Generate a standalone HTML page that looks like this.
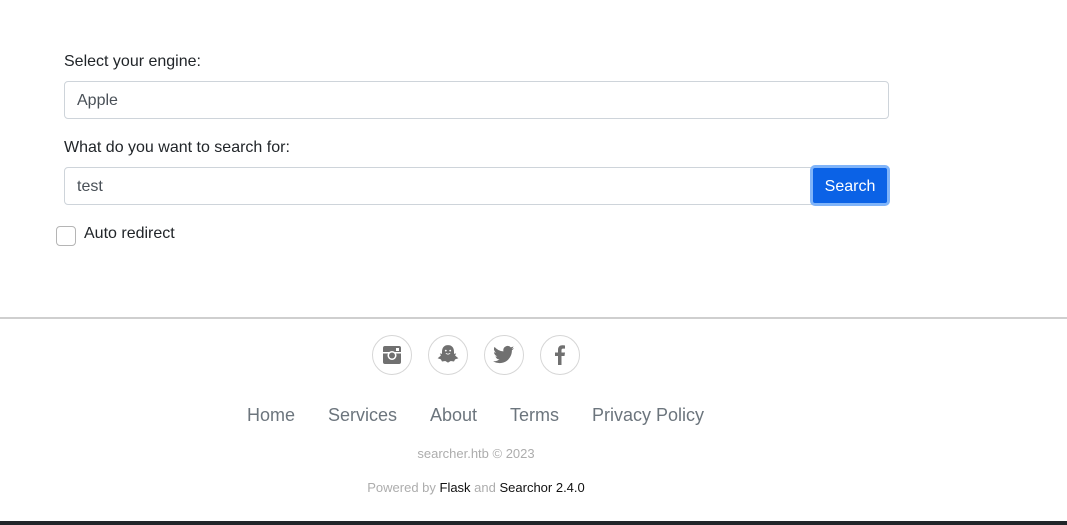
<!DOCTYPE html>
<html><head><style>
body{margin:0;width:1067px;height:525px;position:relative;font-family:"Liberation Sans",sans-serif;background:#fff;overflow:hidden;color:#212529}
.abs{position:absolute}
.lbl{font-size:16px}
.inp{position:absolute;border:1px solid #ced4da;border-radius:4px;box-sizing:border-box;height:38px;font-size:16px;color:#495057;padding-left:12px;line-height:38px}
.btn{position:absolute;left:810px;top:165px;width:80px;height:41px;box-sizing:border-box;border:3px solid #80b4f9;border-radius:5px;background:#0b62e6;color:#fff;font-size:16px;text-align:center;line-height:37px}
.circ{position:absolute;top:335px;width:38px;height:38px;border:1px solid #d6d6d6;border-radius:50%;display:flex;align-items:center;justify-content:center}
.nav{position:absolute;top:405px;font-size:18px;color:#6c757d}
</style></head><body>
<div class="abs lbl" style="left:64px;top:53px">Select your engine:</div>
<div class="inp" style="left:64px;top:81px;width:825px">Apple</div>
<div class="abs lbl" style="left:64px;top:139px">What do you want to search for:</div>
<div class="inp" style="left:64px;top:167px;width:750px;border-radius:4px 0 0 4px">test</div>
<div class="btn">Search</div>
<div class="abs" style="left:56px;top:226px;width:18px;height:18px;border:1px solid #b5b5b5;border-radius:4px"></div>
<div class="abs lbl" style="left:84px;top:225px">Auto redirect</div>
<div class="abs" style="left:0;top:317px;width:1067px;height:2px;background:#cfcfcf"></div>
<div class="circ" style="left:372px"><svg width="20" height="20" viewBox="0 0 20 20"><rect x="1" y="1" width="18" height="18" rx="2" fill="#707070"/><rect x="1" y="7" width="18" height="1.5" fill="#fff"/><circle cx="10" cy="10.5" r="4.5" fill="#fff"/><circle cx="10" cy="10.5" r="3" fill="#707070"/><rect x="14" y="3" width="3" height="3" fill="#fff"/></svg></div>
<div class="circ" style="left:428px"><svg width="24" height="24" viewBox="0 0 22 22"><path d="M11 2c4 0 5.5 3 5.5 6v2l2-.5-1 2 3 2.5-3 1-1 2-3-.5-2.5 1.5-2.5-1.5-3 .5-1-2-3-1 3-2.5-1-2 2 .5V8c0-3 1.5-6 5.5-6z" fill="#707070"/><circle cx="9" cy="7" r=".8" fill="#fff"/><circle cx="13" cy="7" r=".8" fill="#fff"/><path d="M9 9.5q2 1.5 4 0" stroke="#fff" stroke-width=".7" fill="none"/></svg></div>
<div class="circ" style="left:484px"><svg width="22" height="20" viewBox="0 0 24 20"><path d="M23 2.5a9 9 0 0 1-2.7.8A4.7 4.7 0 0 0 22.4.6a9 9 0 0 1-3 1.1A4.7 4.7 0 0 0 11.4 6 13.3 13.3 0 0 1 1.7 1.1a4.7 4.7 0 0 0 1.5 6.3 4.6 4.6 0 0 1-2.1-.6 4.7 4.7 0 0 0 3.7 4.6 4.7 4.7 0 0 1-2.1.1 4.7 4.7 0 0 0 4.4 3.3A9.4 9.4 0 0 1 0 16.7 13.3 13.3 0 0 0 7.2 18.8c8.6 0 13.4-7.2 13.4-13.4v-.6A9.5 9.5 0 0 0 23 2.5z" fill="#707070"/></svg></div>
<div class="circ" style="left:540px"><svg width="12" height="20" viewBox="0 0 12 20"><path d="M7.5 20v-9h3l.5-3.5H7.5V5.3c0-1 .3-1.7 1.8-1.7H11V.5C10.6.4 9.6.3 8.4.3 5.8.3 4 1.9 4 4.8v2.7H1V11h3v9z" fill="#707070"/></svg></div>
<div class="nav" style="left:247px">Home</div>
<div class="nav" style="left:328px">Services</div>
<div class="nav" style="left:430px">About</div>
<div class="nav" style="left:510px">Terms</div>
<div class="nav" style="left:592px">Privacy Policy</div>
<div class="abs" style="left:0;width:952px;text-align:center;top:446px;font-size:13px;color:#adadad">searcher.htb © 2023</div>
<div class="abs" style="left:0;width:952px;text-align:center;top:480px;font-size:13px;color:#adadad">Powered by <span style="color:#111">Flask</span> and <span style="color:#111">Searchor 2.4.0</span></div>
<div class="abs" style="left:0;top:521px;width:1067px;height:4px;background:#212529"></div>
</body></html>
